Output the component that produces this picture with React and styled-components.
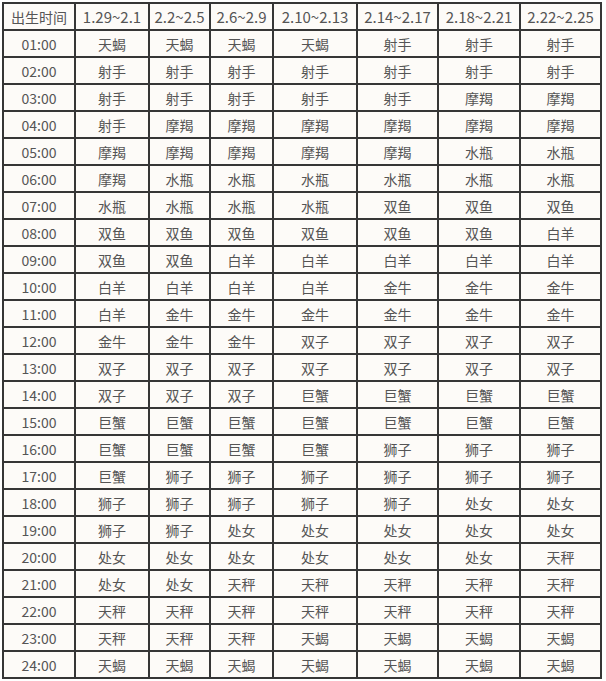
import React from 'react';
import styled, {createGlobalStyle} from 'styled-components';

const GlobalStyle = createGlobalStyle`
  html, body {
    margin: 0;
    padding: 0;
    background: #FFF;
  }
`;

const Page = styled.div`
  padding: 2px 0 0 2px;
`;

const Table = styled.table`
  border-collapse: collapse;
  table-layout: fixed;
  width: 600px;
  background-color: #FDFBF8;

  font-family: "Noto Sans CJK SC", "Noto Sans", sans-serif;
  font-size: 14px;
  color: #555;
`;

const Row = styled.tr`
  height: 27px;
`;

const Cell = styled.td`
  padding: 0;
  border: 2px solid #363636;
  text-align: center;
  vertical-align: middle;
  line-height: 20px;
  white-space: nowrap;
`;

const HeadCell = styled(Cell).attrs({as: 'th'})`
  font-weight: 400;
  font-size: ${props => (props.wide ? 14 : 15)}px;
`;

const widths = [72, 74, 61, 63, 84, 81, 82, 81];

const ranges = ['1.29~2.1', '2.2~2.5', '2.6~2.9', '2.10~2.13', '2.14~2.17', '2.18~2.21', '2.22~2.25'];

const signs = [
  '天蝎 天蝎 天蝎 天蝎 射手 射手 射手',
  '射手 射手 射手 射手 射手 射手 射手',
  '射手 射手 射手 射手 射手 摩羯 摩羯',
  '射手 摩羯 摩羯 摩羯 摩羯 摩羯 摩羯',
  '摩羯 摩羯 摩羯 摩羯 摩羯 水瓶 水瓶',
  '摩羯 水瓶 水瓶 水瓶 水瓶 水瓶 水瓶',
  '水瓶 水瓶 水瓶 水瓶 双鱼 双鱼 双鱼',
  '双鱼 双鱼 双鱼 双鱼 双鱼 双鱼 白羊',
  '双鱼 双鱼 白羊 白羊 白羊 白羊 白羊',
  '白羊 白羊 白羊 白羊 金牛 金牛 金牛',
  '白羊 金牛 金牛 金牛 金牛 金牛 金牛',
  '金牛 金牛 金牛 双子 双子 双子 双子',
  '双子 双子 双子 双子 双子 双子 双子',
  '双子 双子 双子 巨蟹 巨蟹 巨蟹 巨蟹',
  '巨蟹 巨蟹 巨蟹 巨蟹 巨蟹 巨蟹 巨蟹',
  '巨蟹 巨蟹 巨蟹 巨蟹 狮子 狮子 狮子',
  '巨蟹 狮子 狮子 狮子 狮子 狮子 狮子',
  '狮子 狮子 狮子 狮子 狮子 处女 处女',
  '狮子 狮子 处女 处女 处女 处女 处女',
  '处女 处女 处女 处女 处女 处女 天秤',
  '处女 处女 天秤 天秤 天秤 天秤 天秤',
  '天秤 天秤 天秤 天秤 天秤 天秤 天秤',
  '天秤 天秤 天秤 天蝎 天蝎 天蝎 天蝎',
  '天蝎 天蝎 天蝎 天蝎 天蝎 天蝎 天蝎',
].map(line => line.split(' '));

const hourLabel = (i) => `${String(i + 1).padStart(2, '0')}:00`;

const App = () => (
  <Page>
    <GlobalStyle />
    <Table>
      <colgroup>
        {widths.map((w, i) => <col key={i} style={{width: w}} />)}
      </colgroup>
      <thead>
        <Row>
          <HeadCell wide>出生时间</HeadCell>
          {ranges.map(r => <HeadCell key={r}>{r}</HeadCell>)}
        </Row>
      </thead>
      <tbody>
        {signs.map((row, i) => (
          <Row key={i}>
            <Cell>{hourLabel(i)}</Cell>
            {row.map((s, j) => <Cell key={j}>{s}</Cell>)}
          </Row>
        ))}
      </tbody>
    </Table>
  </Page>
);

export default App;
